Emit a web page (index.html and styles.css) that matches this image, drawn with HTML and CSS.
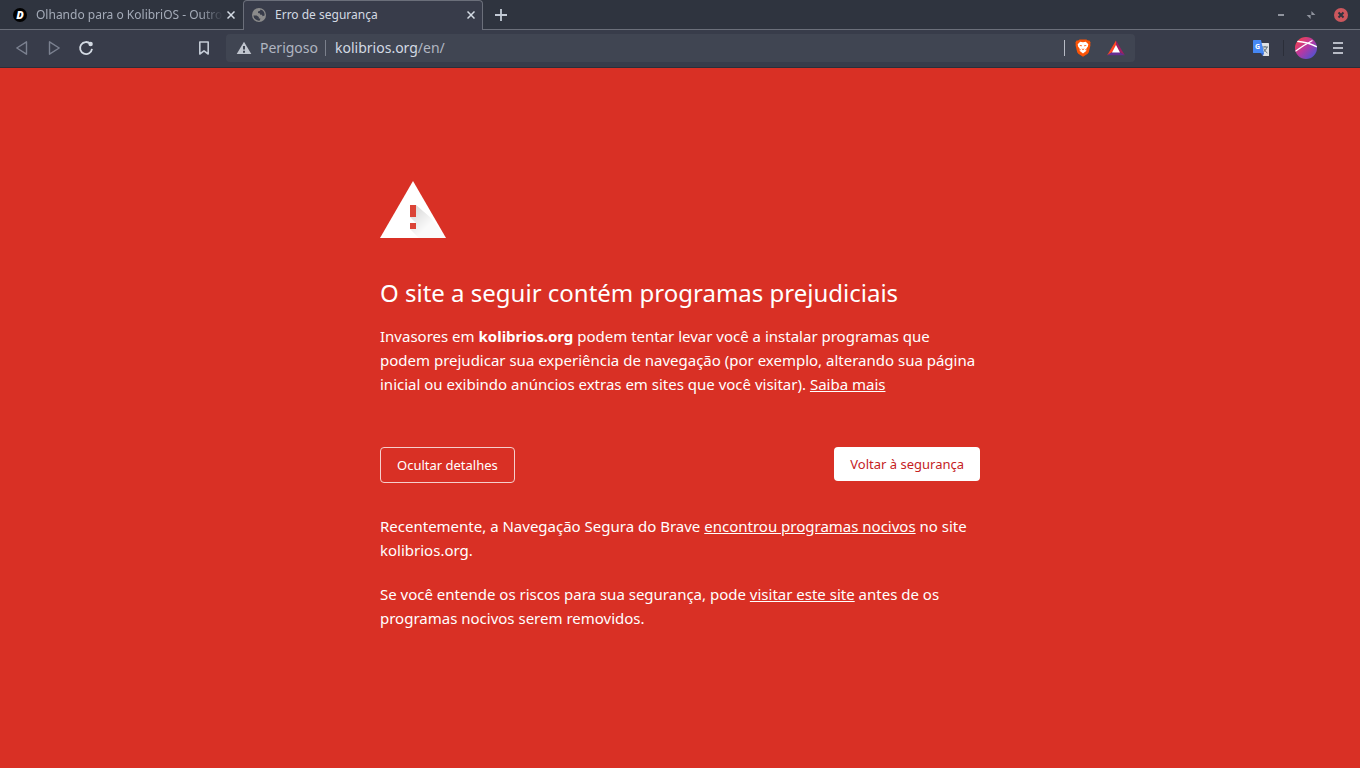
FILE: index.html
```html
<!DOCTYPE html>
<html lang="pt-BR">
<head>
    <meta charset="UTF-8">
    <meta name="viewport" content="width=device-width, initial-scale=1.0">
    <title>Erro de segurança</title>
    <link rel="stylesheet" href="styles.css">
</head>
<body>
    <header class="browser">
        <div class="tab-strip">
            <div class="tab">
                <svg class="favicon" viewBox="0 0 14 14" aria-hidden="true">
                    <circle cx="7" cy="7" r="7" fill="#000"/>
                    <text class="favicon-letter" x="7" y="11" text-anchor="middle">D</text>
                </svg>
                <span class="tab-title faded">Olhando para o KolibriOS - Outro</span>
                <button class="tab-close" aria-label="Fechar guia">
                    <svg width="8" height="8" viewBox="0 0 8 8"><path d="M0.5 0.5L7.5 7.5M7.5 0.5L0.5 7.5"/></svg>
                </button>
            </div>
            <div class="tab active">
                <svg class="favicon" viewBox="0 0 14 14" aria-hidden="true">
                    <circle cx="7" cy="7" r="7" fill="#8b8b8b"/>
                    <path d="M1.4 7.4H4.6L6.8 9V10.4H8.4L7.8 12.6A5.7 5.7 0 0 1 1.4 7.4ZM8.6 1.6L8 2.8L6 3.4V5L8 5.4L8.2 6.8H10L10.6 8.2L12.6 7.4A5.7 5.7 0 0 0 8.6 1.6Z" fill="#383c4a"/>
                </svg>
                <span class="tab-title">Erro de segurança</span>
                <button class="tab-close" aria-label="Fechar guia">
                    <svg width="8" height="8" viewBox="0 0 8 8"><path d="M0.5 0.5L7.5 7.5M7.5 0.5L0.5 7.5"/></svg>
                </button>
            </div>
            <button class="new-tab" aria-label="Nova guia">
                <svg width="12" height="12" viewBox="0 0 12 12"><path d="M6 0V12M0 6H12" stroke="#c3cad5" stroke-width="1.8"/></svg>
            </button>
            <div class="window-controls">
                <button aria-label="Minimizar">
                    <svg width="14" height="14" viewBox="0 0 14 14"><path d="M4 6H10V8H4Z" fill="#90949e"/></svg>
                </button>
                <button aria-label="Restaurar">
                    <svg width="14" height="14" viewBox="0 0 14 14"><path d="M7.4 3V7H11.4ZM2.6 7H6.6V11Z" fill="#90949e"/></svg>
                </button>
                <button aria-label="Fechar">
                    <svg width="14" height="14" viewBox="0 0 14 14"><circle cx="7" cy="7" r="7" fill="#cc575d"/><path d="M4.5 4.5L9.5 9.5M9.5 4.5L4.5 9.5" stroke="#2f343f" stroke-width="2"/></svg>
                </button>
            </div>
        </div>

        <div class="toolbar">
            <div class="nav-buttons">
                <button aria-label="Voltar" disabled>
                    <svg width="16" height="16" viewBox="0 0 16 16"><path d="M12.5 1.8V14.2L2.8 8Z" fill="none" stroke="#7b8190" stroke-width="1.4" stroke-linejoin="round"/></svg>
                </button>
                <button aria-label="Avançar" disabled>
                    <svg width="16" height="16" viewBox="0 0 16 16"><path d="M3.5 1.8V14.2L13.2 8Z" fill="none" stroke="#7b8190" stroke-width="1.4" stroke-linejoin="round"/></svg>
                </button>
                <button aria-label="Recarregar">
                    <svg width="16" height="16" viewBox="0 0 16 16"><path d="M12.5 4A6 6 0 1 0 14 8.8" fill="none" stroke="#d3dae3" stroke-width="1.8"/><circle cx="12.6" cy="4" r="2.2" fill="#d3dae3"/></svg>
                </button>
                <button class="bookmark" aria-label="Favoritar">
                    <svg width="16" height="16" viewBox="0 0 16 16"><path d="M3.8 2H12.2V14L8 10.8L3.8 14Z" fill="none" stroke="#c3cad5" stroke-width="1.6" stroke-linejoin="round"/></svg>
                </button>
            </div>
            <div class="address-bar">
                <svg width="16" height="16" viewBox="0 0 16 16" aria-hidden="true"><path d="M8 1.8L15.3 14H0.7Z" fill="#c0c5ce"/><path d="M7 6H9V9.5H7ZM7 10.7H9V12.7H7Z" fill="#404552"/></svg>
                <span class="danger">Perigoso</span>
                <span class="url"><b>kolibrios.org</b>/en/</span>
                <button class="shields" aria-label="Brave Shields">
                    <svg width="16" height="18" viewBox="0 0 16 18">
                        <path d="M4.5 0.4H11.5L12.8 1.6L14.4 1.5L15.6 3.5L15.2 5L15.5 6L13.8 13.2L12.7 14.8L8 17.8L3.3 14.8L2.2 13.2L0.5 6L0.8 5L0.4 3.5L1.6 1.5L3.2 1.6Z" fill="#fb5407"/>
                        <path d="M5.2 2.8L8 3.3L10.8 2.8L13.3 5.3L12.9 7.4L11.6 9.2L11.2 12L8 14.6L4.8 12L4.4 9.2L3.1 7.4L2.7 5.3Z" fill="#fff"/>
                        <path d="M4.3 6L7 6.2L6.2 7.4ZM11.7 6L9 6.2L9.8 7.4ZM6.4 9.4L8 10L9.6 9.4L8 11.2ZM4.2 9.6L5.8 10.4L5 11.6ZM11.8 9.6L10.2 10.4L11 11.6Z" fill="#fb5407"/>
                    </svg>
                </button>
                <button class="rewards" aria-label="Brave Rewards">
                    <svg width="18" height="16" viewBox="0 0 18 16">
                        <path d="M9 0.5L0.2 15.3L5.6 12L9 6Z" fill="#ff4724"/>
                        <path d="M9 0.5L17.8 15.3L12.4 12L9 6Z" fill="#9e1f63"/>
                        <path d="M0.2 15.3H17.8L12.4 12H5.6Z" fill="#662d91"/>
                        <path d="M9 5L13 12.6H5Z" fill="#fff"/>
                    </svg>
                </button>
            </div>
            <div class="extensions">
                <button aria-label="Tradutor">
                    <svg width="16" height="16" viewBox="0 0 16 16">
                        <path d="M7 3H15.4Q16 3 16 3.6V15.4Q16 16 15.4 16H10Z" fill="#dfe1e3"/>
                        <path d="M9 7H15M12 6V7M14 7Q13 10.5 10.4 12M10.6 8.5Q12 11.5 14.4 13" fill="none" stroke="#607078" stroke-width="1"/>
                        <path d="M7.5 13H11L10 16Z" fill="#3367d6"/>
                        <path d="M0.6 0H8L11 13H0.6Q0 13 0 12.4V0.6Q0 0 0.6 0Z" fill="#4688f4"/>
                        <text class="translate-letter" x="4.6" y="9" text-anchor="middle">G</text>
                    </svg>
                </button>
                <button class="profile" aria-label="Perfil">
                    <svg width="22" height="22" viewBox="0 0 22 22">
                        <defs>
                            <linearGradient id="profile-fill" x1="0" y1="0" x2="1" y2="1">
                                <stop offset="0.15" stop-color="#ee4158"/>
                                <stop offset="0.5" stop-color="#b438a5"/>
                                <stop offset="0.9" stop-color="#4c54d2"/>
                            </linearGradient>
                            <clipPath id="profile-clip"><circle cx="11" cy="11" r="11"/></clipPath>
                        </defs>
                        <circle cx="11" cy="11" r="11" fill="url(#profile-fill)"/>
                        <path d="M0 14.5Q8 8.5 17.5 3.5M2 4.2Q13 5 22 9.8" clip-path="url(#profile-clip)" fill="none" stroke="#fff" stroke-width="1.4"/>
                    </svg>
                </button>
                <button aria-label="Menu">
                    <svg width="16" height="16" viewBox="0 0 16 16"><path d="M3 3H13M3 8H13M3 13H13" stroke="#b7bbc5" stroke-width="2"/></svg>
                </button>
            </div>
        </div>
    </header>

    <main class="warning">
        <div class="warning-content">
            <svg class="warning-icon" width="66" height="57" viewBox="0 0 66 57" aria-hidden="true">
                <defs>
                    <linearGradient id="shadow" gradientUnits="userSpaceOnUse" x1="33" y1="30" x2="48" y2="45">
                        <stop offset="0" stop-color="#000" stop-opacity="0.14"/>
                        <stop offset="1" stop-color="#000" stop-opacity="0.02"/>
                    </linearGradient>
                </defs>
                <path d="M33 0L66 57H0Z" fill="#fff"/>
                <path d="M36 24L51 37L66 57H39L30 48L36 42L30 36Z" fill="url(#shadow)"/>
                <path d="M30 24H36V36H30ZM30 42H36V48H30Z" fill="#db4437"/>
            </svg>
            <h1>O site a seguir contém programas prejudiciais</h1>
            <p>Invasores em <strong>kolibrios.org</strong> podem tentar levar você a instalar programas que podem prejudicar sua experiência de navegação (por exemplo, alterando sua página inicial ou exibindo anúncios extras em sites que você visitar). <a href="#">Saiba mais</a></p>
            <div class="actions">
                <button class="details-btn">Ocultar detalhes</button>
                <button class="safety-btn">Voltar à segurança</button>
            </div>
            <div class="details">
                <p>Recentemente, a Navegação Segura do Brave <a href="#">encontrou programas nocivos</a> no site kolibrios.org.</p>
                <p>Se você entende os riscos para sua segurança, pode <a href="#">visitar este site</a> antes de os programas nocivos serem removidos.</p>
            </div>
        </div>
    </main>
</body>
</html>
```
FILE: styles.css
```css
* {
    box-sizing: border-box;
}

body {
    margin: 0;
    min-height: 100vh;
    display: flex;
    flex-direction: column;
    background-color: #d93025;
    font-family: "Noto Sans", sans-serif;
}

button {
    padding: 0;
    border: none;
    background: none;
    font-family: inherit;
    cursor: pointer;
}

svg {
    display: block;
    flex-shrink: 0;
}

/* tabs */
.tab-strip {
    display: flex;
    height: 30px;
    background-color: #2f343f;
    box-shadow: inset 0 -1px #6b6f7a;
}

.tab {
    display: flex;
    align-items: center;
    width: 243px;
    padding: 0 3px 0 13px;
    color: #a4abb8;
    font-size: 12px;
}

.tab.active {
    width: 240px;
    padding: 0 3px 2px 8px;
    border: 1px solid #6b6f7a;
    border-bottom: none;
    border-radius: 4px 4px 0 0;
    background-color: #383c4a;
    color: #d3dae3;
}

.favicon {
    width: 14px;
    height: 14px;
}

.favicon-letter {
    fill: #fff;
    font-size: 11px;
    font-weight: 900;
    font-style: italic;
}

.tab-title {
    flex: 1;
    margin: 0 5px 0 9px;
    padding-bottom: 1px;
    white-space: nowrap;
}

.tab-title.faded {
    margin-right: 0;
    mask-image: linear-gradient(to right, #000 88%, transparent);
}

.tab-close {
    padding: 4px;
}

.tab-title.faded + .tab-close {
    margin-right: 1px;
}

.tab-close path {
    stroke: #d3dae3;
    stroke-width: 1.5;
}

.new-tab {
    padding: 0 12px;
}

.window-controls {
    display: flex;
    align-items: center;
    gap: 16px;
    margin-left: auto;
    padding-right: 12px;
}

/* toolbar */
.toolbar {
    display: flex;
    align-items: center;
    height: 38px;
    padding-bottom: 1px;
    background-color: #383c4a;
    border-bottom: 1px solid #2b2e39;
}

.nav-buttons {
    display: flex;
    gap: 16px;
    width: 226px;
    padding: 0 14px;
}

.bookmark {
    margin-left: auto;
}

.address-bar {
    flex: 1;
    display: flex;
    align-items: center;
    height: 28px;
    padding: 0 10px;
    border-radius: 4px;
    background-color: #404552;
    color: #b0b6c1;
    font-size: 14px;
    line-height: 16px;
}

.danger {
    margin-left: 8px;
    padding-right: 7px;
    border-right: 1px solid #7b808c;
}

.url {
    flex: 1;
    padding-left: 9px;
}

.url b {
    color: #d3dae3;
    font-weight: normal;
}

.shields {
    padding-left: 10px;
    border-left: 1px solid #b7bbc5;
    height: 16px;
    display: flex;
    align-items: center;
}

.rewards {
    margin-left: 16px;
}

.extensions {
    display: flex;
    align-items: center;
    justify-content: flex-end;
    width: 225px;
    padding-right: 14px;
}

.profile {
    display: flex;
    align-items: center;
    height: 16px;
    margin: 0 13px 0 14px;
    padding-left: 11px;
    border-left: 1px solid #2b2e39;
}

.translate-letter {
    fill: #fff;
    font-size: 7px;
    font-weight: bold;
}

/* warning page */
.warning {
    flex: 1;
    padding: 113px 24px 24px;
    color: #fff;
}

.warning-content {
    max-width: 600px;
    margin: 0 auto;
    font-size: 15px;
    line-height: 24px;
}

.warning h1 {
    margin: 39px 0 15px;
    font-size: 24px;
    font-weight: normal;
    line-height: 32px;
}

.warning p {
    margin: 0;
}

.warning a {
    color: #fff;
}

.actions {
    display: flex;
    justify-content: space-between;
    align-items: flex-start;
    margin: 51px 0 31px;
}

.details-btn,
.safety-btn {
    padding: 8px 16px;
    border-radius: 4px;
    font-size: 13px;
    line-height: 18px;
}

.details-btn {
    border: 1px solid #f6cfcc;
    color: #fff;
}

.safety-btn {
    background-color: #fff;
    color: #c5221f;
}

.details p + p {
    margin-top: 20px;
}
```
